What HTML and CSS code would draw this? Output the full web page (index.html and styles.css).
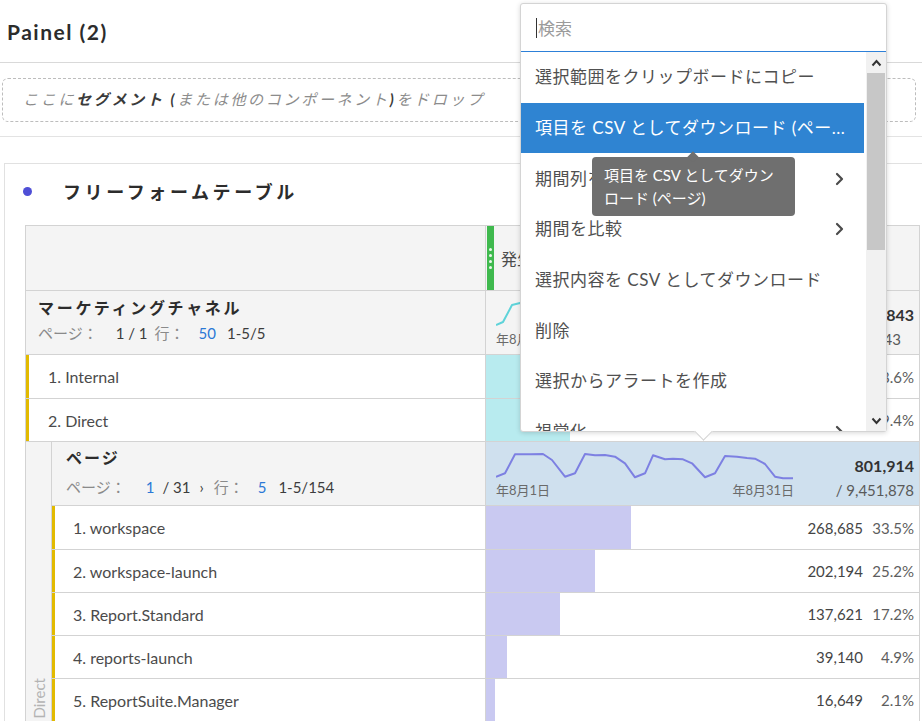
FILE: index.html
```html
<!DOCTYPE html>
<html lang="ja">
<head>
<meta charset="utf-8">
<title>Painel (2)</title>
<link rel="stylesheet" href="styles.css">
</head>
<body>
<div class="page">
  <header class="topbar"><h1 class="panel-title">Painel (2)</h1></header>

  <div class="dropbar">
    <div class="dropzone">ここに <b>セグメント (</b>または他のコンポーネント<b>)</b> をドロップ</div>
  </div>

  <section class="panel">
    <div class="panel-head">
      <span class="dot"></span>
      <h2 class="table-title">フリーフォームテーブル</h2>
    </div>

    <div class="ftable">
      <div class="row colhead">
        <div class="lcell"></div>
        <div class="rcell colhead-r">
          <span class="grip"><i></i><i></i><i></i><i></i></span>
          <span class="metric">発生件数</span>
        </div>
      </div>

      <div class="row dimhead">
        <div class="lcell dimhead-l">
          <div class="dim-name">マーケティングチャネル</div>
          <div class="pager"><span class="muted">ページ：</span><span class="pg">1 / 1</span><span class="muted rows">行：</span><span class="link">50</span><span class="range">1-5/5</span></div>
        </div>
        <div class="rcell summary">
          <div class="spark">
            <svg class="spark-svg" width="300" height="32" viewBox="0 0 300 32"><path d="M0,26 L7,23 L16,6 L24,4 L40,5 L52,11 L66,25 L78,22 L88,5 L100,6 L118,7 L130,14 L140,26 L150,23 L160,6 L175,9 L192,12 L208,26 L220,22 L230,7 L250,8 L266,14 L280,26 L297,27" fill="none" stroke="#5fd3d9" stroke-width="2" stroke-linejoin="round"/></svg>
            <div class="dates"><span>年8月1日</span><span>年8月31日</span></div>
          </div>
          <div class="totals"><b>4,133,843</b><span class="short">/ 4,133,843</span></div>
        </div>
      </div>

      <div class="row item">
        <div class="lcell mark">1. Internal</div>
        <div class="rcell data cyan" style="--w:48.6%"><span class="num">2,009,047</span><span class="pct">48.6%</span></div>
      </div>
      <div class="row item">
        <div class="lcell mark">2. Direct</div>
        <div class="rcell data cyan" style="--w:19.4%"><span class="num">801,914</span><span class="pct">19.4%</span></div>
      </div>

      <div class="nested">
        <div class="gutter"><span class="gutter-label">Direct</span></div>
        <div class="nested-body">
          <div class="row dimhead nhead">
            <div class="ncell dimhead-l">
              <div class="dim-name">ページ</div>
              <div class="pager"><span class="muted">ページ：</span><span class="link first">1</span><span class="pg">/ 31</span><span class="next">›</span><span class="muted rows">行：</span><span class="link">5</span><span class="range">1-5/154</span></div>
            </div>
            <div class="rcell summary blue">
              <div class="spark">
                <svg class="spark-svg" width="300" height="32" viewBox="0 0 300 32"><path d="M0,26.7 L9,23.3 L19,4.3 L34,4.3 L47,4 L56,10 L69,26.7 L79,23.3 L89,4 L99,5.3 L109,5 L119,6.7 L129,13.3 L139,27.3 L149,23.3 L157,5.3 L169,9.3 L177,8.7 L187,9.3 L196,13.3 L209,27.3 L219,23.3 L229,6 L241,6.7 L251,8 L259,8.7 L269,14 L279,26.7 L287,28.3 L297,28.3" fill="none" stroke="#7d80e2" stroke-width="2" stroke-linejoin="round"/></svg>
                <div class="dates"><span>年8月1日</span><span>年8月31日</span></div>
              </div>
              <div class="totals"><b>801,914</b><span>/ 9,451,878</span></div>
            </div>
          </div>

          <div class="row item">
            <div class="ncell mark">1. workspace</div>
            <div class="rcell data purple" style="--w:33.5%"><span class="num">268,685</span><span class="pct">33.5%</span></div>
          </div>
          <div class="row item">
            <div class="ncell mark">2. workspace-launch</div>
            <div class="rcell data purple" style="--w:25.2%"><span class="num">202,194</span><span class="pct">25.2%</span></div>
          </div>
          <div class="row item">
            <div class="ncell mark">3. Report.Standard</div>
            <div class="rcell data purple" style="--w:17.2%"><span class="num">137,621</span><span class="pct">17.2%</span></div>
          </div>
          <div class="row item">
            <div class="ncell mark">4. reports-launch</div>
            <div class="rcell data purple" style="--w:4.9%"><span class="num">39,140</span><span class="pct">4.9%</span></div>
          </div>
          <div class="row item">
            <div class="ncell mark">5. ReportSuite.Manager</div>
            <div class="rcell data purple" style="--w:2.1%"><span class="num">16,649</span><span class="pct">2.1%</span></div>
          </div>
        </div>
      </div>
    </div>
  </section>

  <div class="menu">
    <div class="search"><span class="caret"></span><span class="placeholder">検索</span></div>
    <div class="menu-body">
      <ul class="items">
        <li>選択範囲をクリップボードにコピー</li>
        <li class="active">項目を CSV としてダウンロード (ペー...</li>
        <li class="sub"><span>期間列を挿入</span><svg class="chev" width="9" height="14" viewBox="0 0 9 14"><polyline points="2,2 7,7 2,12" fill="none" stroke="#4b4b4b" stroke-width="2.2" stroke-linecap="round" stroke-linejoin="round"/></svg></li>
        <li class="sub"><span>期間を比較</span><svg class="chev" width="9" height="14" viewBox="0 0 9 14"><polyline points="2,2 7,7 2,12" fill="none" stroke="#4b4b4b" stroke-width="2.2" stroke-linecap="round" stroke-linejoin="round"/></svg></li>
        <li>選択内容を CSV としてダウンロード</li>
        <li>削除</li>
        <li>選択からアラートを作成</li>
        <li class="sub"><span>視覚化</span><svg class="chev" width="9" height="14" viewBox="0 0 9 14"><polyline points="2,2 7,7 2,12" fill="none" stroke="#4b4b4b" stroke-width="2.2" stroke-linecap="round" stroke-linejoin="round"/></svg></li>
      </ul>
      <div class="scrollbar">
        <svg class="sarrow" width="11" height="8" viewBox="0 0 11 8"><polyline points="1.5,6.5 5.5,2 9.5,6.5" fill="none" stroke="#333" stroke-width="2"/></svg>
        <span class="thumb"></span>
        <span class="track"></span>
        <svg class="sarrow" width="11" height="8" viewBox="0 0 11 8"><polyline points="1.5,1.5 5.5,6 9.5,1.5" fill="none" stroke="#333" stroke-width="2"/></svg>
      </div>
    </div>
  </div>

  <div class="tooltip">項目を CSV としてダウン<br>ロード (ページ)</div>
</div>
</body>
</html>
```

FILE: styles.css
```css
* { box-sizing: border-box; }
html, body { margin: 0; padding: 0; }
body {
  background: #fff;
  font-family: Lato, "Noto Sans CJK JP", "Noto Sans", sans-serif;
  color: #4b4b4b;
}
.page {
  position: relative;
  width: 922px;
  height: 721px;
  overflow: hidden;
}

/* top bar */
.topbar {
  height: 63px;
  border-bottom: 1px solid #d9d9d9;
  display: flex;
  align-items: center;
  padding-left: 7px;
}
.panel-title {
  margin: 0;
  font-size: 21px;
  font-weight: 700;
  color: #2c2c2c;
  letter-spacing: 1.5px;
}

/* drop zone */
.dropbar {
  height: 74px;
  border-bottom: 1px solid #e3e3e3;
  padding: 15px 6px 0 2px;
}
.dropzone {
  height: 44px;
  border: 1px dashed #bdbdbd;
  border-radius: 6px;
  display: flex;
  align-items: center;
  padding: 0 0 3px 20px;
  font-size: 15px;
  font-style: italic;
  letter-spacing: 2.7px;
  color: #8c8c8c;
  white-space: nowrap;
}
.dropzone b { color: #3a3a3a; font-weight: 700; }

/* panel */
.panel {
  margin-top: 26px;
  margin-left: 4px;
  width: 960px;
  border: 1px solid #e1e1e1;
  border-bottom: none;
}
.panel-head {
  height: 54px;
  display: flex;
  align-items: center;
}
.dot {
  width: 9px;
  height: 9px;
  border-radius: 50%;
  background: #4f4fd6;
  margin-left: 18px;
}
.table-title {
  margin: 0 0 0 31px;
  font-size: 18px;
  font-weight: 700;
  letter-spacing: 3.6px;
  color: #2c2c2c;
}

/* table */
.ftable {
  margin-top: 7px;
  margin-left: 20px;
  width: 895px;
  border: 1px solid #d3d3d3;
  border-bottom: none;
}
.row {
  display: flex;
  border-bottom: 1px solid #d3d3d3;
}
.lcell {
  width: 460px;
  flex: none;
  border-right: 1px solid #d3d3d3;
}
.ncell {
  width: 434px;
  flex: none;
  border-right: 1px solid #d3d3d3;
}
.rcell { flex: 1; min-width: 0; }

.colhead { height: 65px; background: #f4f4f4; }
.colhead-r { display: flex; align-items: center; }
.grip {
  align-self: stretch;
  width: 7px;
  margin-left: 1px;
  background: #3fb94e;
  display: flex;
  flex-direction: column;
  align-items: center;
  justify-content: center;
  gap: 3px;
}
.grip i {
  width: 3px;
  height: 3px;
  border-radius: 50%;
  background: #e9f8ea;
}
.metric { margin-left: 7px; font-size: 16px; color: #4b4b4b; }

.dimhead { height: 64px; background: #f4f4f4; }
.dimhead-l { padding: 4px 0 0 12px; }
.nhead .dimhead-l { padding: 3px 0 0 14px; }
.dim-name {
  font-size: 16px;
  font-weight: 700;
  letter-spacing: 2.7px;
  line-height: 26px;
  color: #2c2c2c;
}
.nhead .dim-name { letter-spacing: 2px; }
.pager {
  font-size: 15px;
  line-height: 24px;
  color: #3c3c3c;
  white-space: nowrap;
}
.nhead .pager { margin-top: 4px; }
.pager .muted { color: #8a8a8a; }
.pager .pg { margin-left: 18px; }
.pager .rows { margin-left: 7px; }
.pager .link { color: #2b78d6; margin-left: 14px; }
.pager .range { margin-left: 11px; }
.nhead .pager .link.first { margin-left: 20px; }
.nhead .pager .pg { margin-left: 8px; }
.pager .next { margin-left: 9px; }
.nhead .pager .rows { margin-left: 10px; }
.nhead .pager .link { margin-left: 14px; }
.nhead .pager .range { margin-left: 12px; }

.summary {
  display: flex;
  justify-content: space-between;
  padding: 8px 5px 0 10px;
}
.summary.blue { background: #cfe0ee; }
.spark-svg { display: block; }
.dates {
  width: 298px;
  display: flex;
  justify-content: space-between;
  font-size: 13px;
  line-height: 16px;
  color: #6a6a6a;
}
.totals {
  display: flex;
  flex-direction: column;
  align-items: flex-end;
  padding-top: 4px;
}
.totals b { font-size: 16px; line-height: 24px; color: #333; }
.totals span { font-size: 15px; line-height: 24px; color: #5a5a5a; }
.totals .short { margin-right: 13px; }

.item { height: 43px; }
.dimhead + .item { height: 44px; }
.mark {
  display: flex;
  align-items: center;
  font-size: 16px;
  color: #4b4b4b;
  box-shadow: inset 3px 0 0 #e2ba00;
}
.lcell.mark { padding-left: 22px; }
.ncell.mark { padding-left: 21px; }

.data {
  display: flex;
  align-items: center;
  justify-content: flex-end;
  padding-right: 5px;
  font-size: 15px;
}
.data.cyan { background: linear-gradient(to right, #b8ebef var(--w), #fff var(--w)); }
.data.purple { background: linear-gradient(to right, #c9c9f1 var(--w), #fff var(--w)); }
.num { color: #454545; }
.pct { width: 51px; text-align: right; color: #5e5e5e; }

/* nested breakdown */
.nested { display: flex; }
.gutter {
  width: 26px;
  flex: none;
  background: #f4f4f4;
  border-right: 1px solid #d3d3d3;
  display: flex;
  flex-direction: column;
  justify-content: flex-end;
  align-items: center;
  padding-bottom: 4px;
}
.gutter-label {
  writing-mode: vertical-rl;
  transform: rotate(180deg);
  font-size: 15px;
  color: #b3b3b3;
}
.nested-body { flex: 1; min-width: 0; }

/* dropdown menu */
.menu {
  position: absolute;
  left: 520px;
  top: 3px;
  width: 367px;
  height: 429px;
  background: #fff;
  border: 1px solid #d4d4d4;
  border-radius: 3px;
  box-shadow: 0 1px 5px rgba(0, 0, 0, 0.16);
}
.menu::after {
  content: "";
  position: absolute;
  left: 176px;
  bottom: -7px;
  width: 12px;
  height: 12px;
  background: #fff;
  border-right: 1px solid #d4d4d4;
  border-bottom: 1px solid #d4d4d4;
  transform: rotate(45deg);
}
.search {
  height: 48px;
  border-bottom: 1px solid #2d80d8;
  display: flex;
  align-items: center;
  padding-left: 15px;
}
.caret {
  width: 1px;
  height: 20px;
  background: #333;
}
.placeholder {
  margin-left: 1px;
  font-size: 17px;
  color: #9b9b9b;
}
.menu-body {
  display: flex;
  height: 379px;
  overflow: hidden;
}
.items {
  list-style: none;
  margin: 0;
  padding: 0;
  width: 343px;
  flex: none;
}
.items li {
  height: 50.7px;
  display: flex;
  align-items: center;
  justify-content: space-between;
  padding: 0 20px 3px 14px;
  font-size: 17px;
  letter-spacing: 0.5px;
  color: #505050;
  white-space: nowrap;
}
.items li.sub .chev { margin-top: 3px; }
.items li.active {
  background: #2f84d2;
  color: #fff;
}
.scrollbar {
  margin-left: 2px;
  width: 20px;
  background: #f1f1f1;
  display: flex;
  flex-direction: column;
  align-items: center;
}
.sarrow { flex: none; margin: 7px 0 6px; }
.thumb {
  width: 18px;
  height: 177px;
  background: #c7c7c7;
  flex: none;
}
.track { flex: 1; }

/* tooltip */
.tooltip {
  position: absolute;
  left: 592px;
  top: 157px;
  width: 203px;
  height: 59px;
  padding: 7px 12px 0;
  background: #6f6f6f;
  border-radius: 4px;
  color: #fff;
  font-size: 15px;
  line-height: 23px;
  white-space: nowrap;
}
.tooltip::before {
  content: "";
  position: absolute;
  left: 97px;
  top: -4px;
  width: 8px;
  height: 8px;
  background: #6f6f6f;
  transform: rotate(45deg);
}
```
